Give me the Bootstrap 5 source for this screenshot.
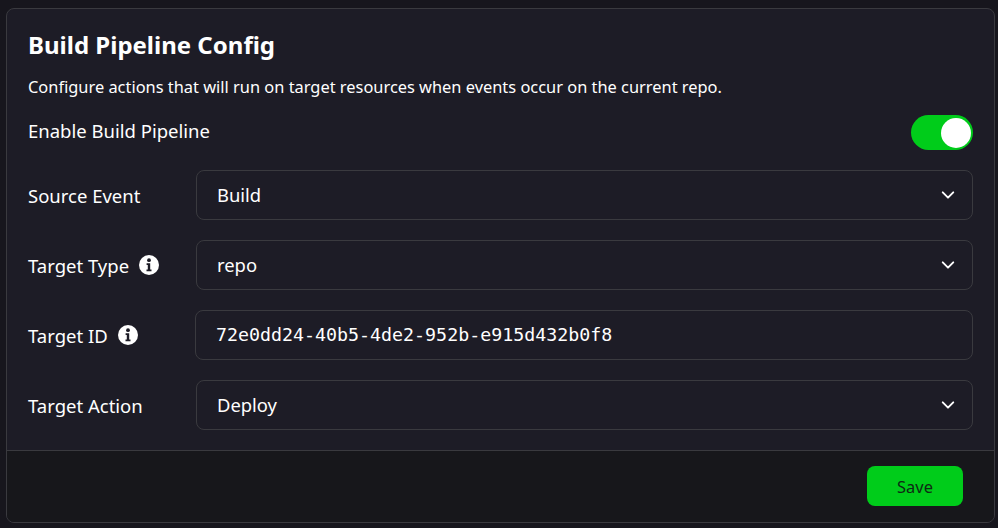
<!DOCTYPE html>
<html lang="en" data-bs-theme="dark">
<head>
<meta charset="utf-8">
<title>Build Pipeline Config</title>
<link rel="stylesheet" href="https://cdn.jsdelivr.net/npm/bootstrap@5.3.0/dist/css/bootstrap.min.css">
<style>
html, body { height: 100%; }
body { background: #17161d; font-family: "Noto Sans", sans-serif; color: #fff; font-size: 18px; padding: 8px 3px 5px 6px; overflow: hidden; }
.cfg-card { height: 515px; background: #1d1c26; border: 1px solid #3a3a3f; border-radius: 8px; color: #fff; overflow: hidden; }
.cfg-body { padding: 20px 21px 20px; }
.cfg-title { font-size: 24px; font-weight: 700; line-height: 32px; margin: 0 0 14px; }
.cfg-desc { font-size: 16.4px; line-height: 24px; margin: 0 0 16px; }
.cfg-label { font-size: 18.5px; line-height: 24px; width: 168px; flex: none; padding-top: 2px; }
.cfg-toggle .cfg-label { padding: 0 0 3px; }
.cfg-id-label { width: 167px; }
.cfg-row { height: 50px; margin-bottom: 20px; }
.cfg-row:last-child { margin-bottom: 0; }
.cfg-toggle { height: 35px; margin-bottom: 20px; }
.cfg-switch { width: 62px; height: 35px; border-radius: 18px; background: #00cc1a; padding: 3px 2px; display: flex; justify-content: flex-end; }
.cfg-knob { width: 30px; height: 30px; border-radius: 50%; background: #fff; }
.cfg-field { height: 50px; background: transparent; border: 1px solid #3a3a3f; border-radius: 8px; padding: 0 20px; font-size: 18.4px; line-height: 48px; color: #fff; display: flex; align-items: center; justify-content: space-between; flex: 1 1 0; min-width: 0; }
.cfg-mono { font-family: "DejaVu Sans Mono", monospace; font-size: 18.3px; }
.cfg-chev { width: 14px; height: 14px; margin-right: -3px; }
.cfg-info { width: 20px; height: 20px; margin-left: 10px; vertical-align: -2px; }
.cfg-foot { height: 72px; background: #17171b; border-top: 1px solid #3a3a3f; padding: 15px 31px 0 0; }
.cfg-save { width: 96px; height: 40px; background: #00cc1a; border: 0; border-radius: 8px; color: #0e2a14; font-size: 16.4px; padding: 2px 0 0; }
.cfg-save:hover { background: #00cc1a; color: #0e2a14; }
</style>
</head>
<body>
<div class="card cfg-card">
  <div class="cfg-body">
    <h1 class="cfg-title">Build Pipeline Config</h1>
    <p class="cfg-desc">Configure actions that will run on target resources when events occur on the current repo.</p>
    <div class="d-flex align-items-center justify-content-between cfg-toggle">
      <span class="cfg-label w-auto">Enable Build Pipeline</span>
      <div class="cfg-switch"><div class="cfg-knob"></div></div>
    </div>
    <div class="d-flex align-items-center cfg-row">
      <span class="cfg-label">Source Event</span>
      <div class="cfg-field"><span>Build</span><svg class="cfg-chev" viewBox="0 0 16 16"><path d="M2 5l6 6 6-6" fill="none" stroke="#fff" stroke-width="2.2" stroke-linecap="round" stroke-linejoin="round"/></svg></div>
    </div>
    <div class="d-flex align-items-center cfg-row">
      <span class="cfg-label">Target Type<svg class="cfg-info" viewBox="0 0 20 20"><circle cx="10" cy="10" r="10" fill="#fff"/><circle cx="10" cy="5.2" r="1.9" fill="#1d1c26"/><path d="M7.6 8.2h3.6v6.2h1.3v1.9H7.5v-1.9h1.3v-4.3H7.6z" fill="#1d1c26"/></svg></span>
      <div class="cfg-field"><span>repo</span><svg class="cfg-chev" viewBox="0 0 16 16"><path d="M2 5l6 6 6-6" fill="none" stroke="#fff" stroke-width="2.2" stroke-linecap="round" stroke-linejoin="round"/></svg></div>
    </div>
    <div class="d-flex align-items-center cfg-row">
      <span class="cfg-label cfg-id-label">Target ID<svg class="cfg-info" viewBox="0 0 20 20"><circle cx="10" cy="10" r="10" fill="#fff"/><circle cx="10" cy="5.2" r="1.9" fill="#1d1c26"/><path d="M7.6 8.2h3.6v6.2h1.3v1.9H7.5v-1.9h1.3v-4.3H7.6z" fill="#1d1c26"/></svg></span>
      <div class="cfg-field cfg-mono"><span>72e0dd24-40b5-4de2-952b-e915d432b0f8</span></div>
    </div>
    <div class="d-flex align-items-center cfg-row">
      <span class="cfg-label">Target Action</span>
      <div class="cfg-field"><span>Deploy</span><svg class="cfg-chev" viewBox="0 0 16 16"><path d="M2 5l6 6 6-6" fill="none" stroke="#fff" stroke-width="2.2" stroke-linecap="round" stroke-linejoin="round"/></svg></div>
    </div>
  </div>
  <div class="cfg-foot d-flex justify-content-end align-items-start">
    <button type="button" class="btn cfg-save">Save</button>
  </div>
</div>
<script src="https://cdn.jsdelivr.net/npm/bootstrap@5.3.0/dist/js/bootstrap.bundle.min.js"></script>
</body>
</html>
